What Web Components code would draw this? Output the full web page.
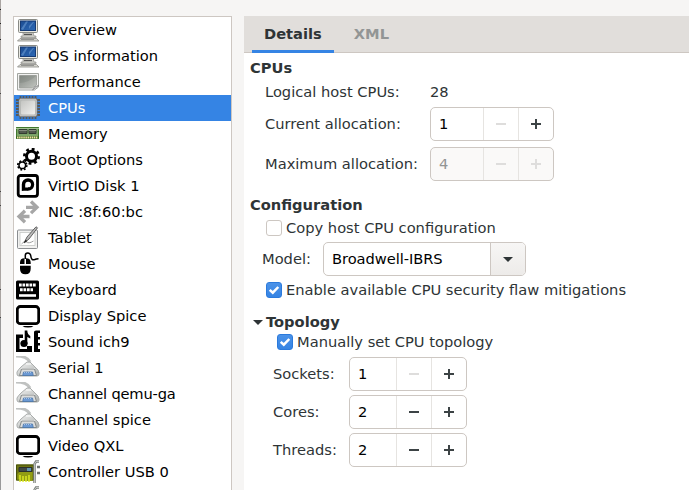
<!DOCTYPE html>
<html lang="en">
<head>
<meta charset="utf-8">
<title>CPUs</title>
<style>
html,body{margin:0;height:100%;overflow:hidden}
body{font-family:"DejaVu Sans",sans-serif;font-size:14.667px;color:#2e3436;background:#f6f5f4}
</style>
</head>
<body>
<vm-window></vm-window>
<script>
const grad = (id, a, b) => `<linearGradient id="${id}" x2="1" y2="1"><stop stop-color="${a}"/><stop offset="1" stop-color="${b}"/></linearGradient>`;
const ICONS = {
computer: `<defs>${grad('s','#1c4c92','#2d69b5')}</defs>
<path d="M4 20.500 1.500 23h21.500l-2.500-2.500z" fill="#d6d6d0" stroke="#8b8c87" stroke-width=".8"/><path d="M5 21.500h13" stroke="#777" stroke-width=".7"/>
<path d="M7 14h10l1 4h2v1.500H5V18h2z" fill="#c9c9c3" stroke="#81827e" stroke-width=".6"/><path d="M8 16.500h8" stroke="#555" stroke-width="1.300"/>
<rect x="2.500" y="1.500" width="19" height="13" rx="1" fill="#e8e8e2" stroke="#888a85"/>
<rect x="4.500" y="3" width="15" height="9.500" fill="url(#s)" stroke="#163b75"/><path d="M5 11 10 3.500h2L7 12z M13 8l4-4h1l-5 7z" fill="#6b9bd2" opacity=".6"/>`,
perf: `<defs>${grad('p','#858a84','#c2c5c0')}</defs><path d="M1.500 3.500h21V17l-4 3h-17z" fill="#f2f2f1" stroke="#a2a5a0"/><path d="M3.500 5.500h17v9.500l-4 3h-13z" fill="url(#p)" stroke="#999c97" stroke-width=".8"/><path d="M3.500 13Q12 13 20 6V5.500H3.500z" fill="#777d76" opacity=".3"/><path d="M16.500 20q1.500-4 6-4.500z" fill="#fff" stroke="#888" stroke-width=".8"/>`,
cpu: `<defs>${grad('c','#c4c5c2','#f0f0ee')}</defs><path d="M4.500 0v23M7.500 0v23M10.500 0v23M13.500 0v23M16.500 0v23M19.500 0v23M0 4h24M0 7h24M0 10h24M0 13h24M0 16h24M0 19h24" stroke="#55595b" stroke-width="1.800"/><rect x="2.500" y="2" width="19" height="19" rx="1.500" fill="#6b6f70"/><rect x="3.700" y="3.200" width="16.600" height="16.600" rx="1" fill="#b3b5b2" stroke="#d8d8d6" stroke-width=".8"/><rect x="5" y="4.500" width="14" height="14" rx="1" fill="url(#c)"/>`,
memory: `<path d="M0 5h23v12H0z" fill="#7fa96c"/><path d="M.5 5.500h22v10H.5z" fill="#7ca568" stroke="#42772d"/><path d="M0 6.500h23" stroke="#a4c494"/><path d="M3 7.500h8v4H3zM13 7.500h7v4h-7z" fill="#545b50" stroke="#333c31"/><path d="M3 8.500h8M13 8.500h7" stroke="#9da396" stroke-width=".7"/><path d="M0 15.500h23" stroke="#35661f" stroke-width="2.500"/><path d="M1 15.500h21" stroke="#f0dfa2" stroke-width="2" stroke-dasharray="1.500 .6"/>`,
gears: `<g fill="none" stroke="#000"><circle cx="15.500" cy="8.300" r="5" stroke-width="3"/><circle cx="15.500" cy="8.300" r="7.200" stroke-width="2.600" stroke-dasharray="2.800 2.855"/><circle cx="6.300" cy="17.300" r="3.300" stroke-width="1.500"/><circle cx="6.300" cy="17.300" r="4.500" stroke-width="1.700" stroke-dasharray="1.800 1.734"/></g>`,
disk: `<rect x="2.200" y="1.500" width="19.300" height="20.800" rx="2.200" fill="#fff" stroke="#000" stroke-width="2.800"/><path d="M5.800 17V10.500a6.200 6.200 0 1 1 6.200 6.200H8z"/><path d="M9.200 13.500V10.600a2.900 2.900 0 1 1 2.900 2.900z" fill="#fff"/><path d="M11 16.500l1.500-3.500 2 2z"/>`,
nic: `<g fill="none" stroke="#a6a6a6" stroke-width="3.300"><path d="M10 7.300h11M15 1.500l6 5.800-6 5.800M13.500 16.500h-11M9 10.700l-6 5.800L9 22.300"/></g>`,
tablet: `<rect x="1.500" y="4" width="20" height="18.500" rx="1" fill="#f1f1f0" stroke="#8a8d90"/><rect x="4" y="6.500" width="15" height="13" fill="#fff" stroke="#c4c6c4" stroke-width=".8"/><path d="M5.500 18q3-4 5-2t7-1" fill="none" stroke="#888" stroke-width=".8"/><path d="M8 17l3-6L20 .8l1.500 1L13 13z" fill="#bbb" stroke="#555" stroke-width=".9"/><path d="M8 17l1.500-3.300 2 1.300z" fill="#222"/>`,
mouse: `<path d="M4 12V10.500q0-4.300 4.500-4.300V12zM10 6.200q4.700 0 4.700 4.300V12H10zM4 13.700h10.700v3q0 5.500-5.300 5.500T4 16.700z"/><path d="M9.300 7V3.500q0-2.500 2.500-2.500t3 3q.5 5 4 3.500 1.500-.8 3.700-.8" fill="none" stroke="#000" stroke-width="1.500"/>`,
keyboard: `<rect x="0" y="2.500" width="23" height="19" rx="1.500"/><path d="M3 7h17M4 11.700h13" stroke="#fff" stroke-width="3" stroke-dasharray="2.700 .8"/><path d="M3 17.500h17" stroke="#fff" stroke-width="2.600"/>`,
display: `<rect x="1.300" y="2.500" width="21.400" height="17.200" rx="3" fill="#fff" stroke="#000" stroke-width="2.800"/><path d="M6.500 22h11q-1.500 1.500-5.500 1.500T6.500 22z"/>`,
sound: `<path d="M0 4.500h7v3.500H3.500v11H11v-3h5v6H0zM18 2q0-1.500 2-1.500h4V3h-2v4h2v2.500h-2V13h2v2.500h-2V19h2v3h-6z"/><circle cx="8" cy="13.500" r="3.600"/><path d="M8.700.5h2.600q0 3.500 3 5.500v2.500l-3-1.500v7H8.700z"/>`,
serial: `<defs>${grad('h','#f5f5f4','#aaaead')}</defs><path d="M0 0Q11 0 14 6" fill="none" stroke="#c0c2c1" stroke-width="3"/><path d="M1 16q1-2 4-5l6-5h3l5 5q4 3 4 6v1q0 2-2 2H3q-2 0-2-2z" fill="url(#h)" stroke="#aaadac"/><path d="M5 12.500h14M10 8h5" stroke="#fff"/><path d="M5.500 13h13l2 6.500H3.500z" fill="#dcdddd" stroke="#858988"/><path d="M7.500 16h9l.8 3.500H6.700z" fill="#6d9ad4" stroke="#4a76aa" stroke-width=".8"/><path d="M8 16.500h8" stroke="#a9c3e4" stroke-dasharray="1 1"/>`,
card: `<path d="M0 4.500h18v16H0z" fill="#6d7413"/><path d="M.5 5h17v15H.5z" fill="none" stroke="#465009"/><path d="M1.500 20V14l2-2h13v9H4v-2z" fill="#929d13"/><path d="M4 22v-7M7 22v-6M10 22v-6M13 22v-7" stroke="#e2ed24" stroke-width="1.400"/><path d="M3 7.500h13v4H3z" fill="#404945" stroke="#2b302d"/><path d="M11 8h4v3h-4z" fill="#6294b0"/><path d="M18.500 23V4l1.500-2.500h3" fill="none" stroke="#7b7f7c" stroke-width="2.500"/><path d="M18.500 23V4l1.500-2.500h3" fill="none" stroke="#d2d5d2" stroke-width=".8"/><path d="M21 7h3M21 13h3" stroke="#6e726e" stroke-width="2.500"/>`
};

function define(name, render) {
  customElements.define(name, class extends HTMLElement {
    connectedCallback() {
      if (!this.shadowRoot) this.attachShadow({mode: 'open'}).innerHTML = render(this);
    }
  });
}

define('hw-item', e => `<style>
:host{display:flex;align-items:center;height:26px;padding-left:2px;gap:8px;color:#000;white-space:nowrap}
:host([selected]){background:#3584e4;color:#fff}
svg{width:24px;height:24px;flex:none}
span{padding-bottom:2px}
</style><svg viewBox="0 0 24 24">${ICONS[e.getAttribute('icon')]}</svg><span><slot></slot></span>`);

define('hw-list', () => `<style>
:host{display:block;box-sizing:border-box;width:219px;border:1px solid #cdc7c2;border-bottom:0;background:#fff;overflow:hidden}
</style><slot></slot>`);

define('tab-bar', () => `<style>
:host{display:flex;height:36px;padding-left:8px;gap:8px;background:#e1dedb;border-bottom:1px solid #cdc7c2;font-weight:bold}
span{height:37px;box-sizing:border-box;padding:0 12px;line-height:36px;color:#929595}
.on{color:#2e3436;border-bottom:3px solid #3584e4}
</style><span class="on">Details</span><span>XML</span>`);

define('spin-button', e => {
  const off = e.hasAttribute('disabled');
  const m = off || e.hasAttribute('min') ? ' class="dim"' : '', p = off ? ' class="dim"' : '';
  return `<style>
:host{display:flex;box-sizing:border-box;width:118px;height:34px;border:1px solid #cdc7c2;border-radius:5px;background:#fff;color:#000;line-height:32px}
:host([wide]){width:124px}
:host([disabled]){background:#faf9f8;color:#929595}
span{flex:1;padding-left:8px}
i{width:34px;border-left:1px solid #e6e4e1;display:grid;place-items:center}
svg{width:12px;height:12px;stroke:#3c4345;stroke-width:2}
.dim{stroke:#dedddc}
</style><span>${e.getAttribute('value')}</span><i><svg${m} viewBox="0 0 12 12"><path d="M1 6h10"/></svg></i><i><svg${p} viewBox="0 0 12 12"><path d="M1 6h10M6 1v10"/></svg></i>`;
});

define('check-box', e => `<style>
:host{display:flex;align-items:center;gap:4px;white-space:nowrap}
b{box-sizing:border-box;width:16px;height:16px;border:1px solid #cdc7c2;border-radius:3px;background:#fff;display:block}
span{padding-bottom:2px}
:host([checked]) b{border-color:#2b7adc;background:linear-gradient(#4b92e8,#3584e4)}
svg{display:block;width:14px;height:14px}
</style><b>${e.hasAttribute('checked') ? '<svg viewBox="0 0 14 14"><path d="M2.700 6.800 5.800 9.700 11.300 4" fill="none" stroke="#fff" stroke-width="2.500"/></svg>' : ''}</b><span><slot></slot></span>`);

define('combo-box', () => `<style>
:host{display:flex;box-sizing:border-box;width:203px;height:34px;border:1px solid #cdc7c2;border-radius:5px;background:#fff;color:#000;line-height:32px;overflow:hidden}
span{flex:1;padding-left:8px;letter-spacing:-.05px}
i{width:34px;border-left:1px solid #cdc7c2;background:linear-gradient(#f7f6f5,#edebe9);display:grid;place-items:center}
svg{width:10px;height:5px}
</style><span><slot></slot></span><i><svg viewBox="0 0 10 5"><path d="M0 0h10L5 5z" fill="#2e3436"/></svg></i>`);

define('form-row', e => `<style>
:host{display:flex;align-items:center;white-space:nowrap;height:${e.getAttribute('h') || 34}px;margin-top:${e.getAttribute('gap') || 0}px;padding-left:${e.getAttribute('indent') || 0}px}
label{flex:none;padding-bottom:2px;width:${e.getAttribute('label-width') || 0}px}
:host(:not([label])) label{display:none}
</style><label>${e.getAttribute('label') || ''}</label><slot></slot>`);

define('vm-window', () => `<style>
:host{display:grid;grid-template-columns:219px 1fr;column-gap:12px;height:490px;box-sizing:border-box;padding:16px 0 0 12px;border-left:1px solid #9c9896;border-image:linear-gradient(#aaa5a2 0 10px,#222 10px 11px,#aaa5a2 11px 24px,#222 24px 25px,#aaa5a2 25px 40px,#222 40px 41px,#aaa5a2 41px 94px,#444 94px 95px,#aaa5a2 95px 191px,#444 191px 192px,#aaa5a2 192px 205px,#444 205px 206px,#aaa5a2 206px 289px,#444 289px 290px,#aaa5a2 290px 317px,#444 317px 318px,#999 318px) 1;border-width:0 0 0 1px}
hw-list{height:474px}
main{background:#fff;height:474px;overflow:hidden}
section{display:block;padding:3px 0 0 6px}
strong,form-row>span{padding-bottom:2px}
strong svg{width:10px;height:5px;margin:0 3px 2px 3px}
.tight{letter-spacing:-.18px}
</style>
<hw-list>
<hw-item icon="computer">Overview</hw-item><hw-item icon="computer">OS information</hw-item><hw-item icon="perf">Performance</hw-item><hw-item icon="cpu" selected>CPUs</hw-item><hw-item icon="memory">Memory</hw-item><hw-item icon="gears">Boot Options</hw-item><hw-item icon="disk">VirtIO Disk 1</hw-item><hw-item icon="nic">NIC :8f:60:bc</hw-item><hw-item icon="tablet">Tablet</hw-item><hw-item icon="mouse">Mouse</hw-item><hw-item icon="keyboard">Keyboard</hw-item><hw-item icon="display">Display Spice</hw-item><hw-item icon="sound">Sound ich9</hw-item><hw-item icon="serial">Serial 1</hw-item><hw-item icon="serial" class="tight">Channel qemu-ga</hw-item><hw-item icon="serial">Channel spice</hw-item><hw-item icon="display">Video QXL</hw-item><hw-item icon="card">Controller USB 0</hw-item><hw-item icon="card"></hw-item>
</hw-list>
<main><tab-bar></tab-bar><section>
<form-row h="24"><strong>CPUs</strong></form-row>
<form-row h="24" indent="15" label-width="165" label="Logical host CPUs:"><span>28</span></form-row>
<form-row gap="3" indent="15" label-width="165" label="Current allocation:"><spin-button wide min value="1"></spin-button></form-row>
<form-row gap="6" indent="15" label-width="165" label="Maximum allocation:"><spin-button wide disabled value="4"></spin-button></form-row>
<form-row h="24" gap="12"><strong>Configuration</strong></form-row>
<form-row h="22" indent="16"><check-box>Copy host CPU configuration</check-box></form-row>
<form-row gap="3" indent="12" label-width="61" label="Model:"><combo-box>Broadwell-IBRS</combo-box></form-row>
<form-row h="22" gap="3" indent="16"><check-box checked>Enable available CPU security flaw mitigations</check-box></form-row>
<form-row h="22" gap="10"><strong><svg viewBox="0 0 10 5"><path d="M0 0h10L5 5z" fill="#2e3436"/></svg>Topology</strong></form-row>
<form-row h="18" indent="27"><check-box checked>Manually set CPU topology</check-box></form-row>
<form-row gap="6" indent="23" label-width="76" label="Sockets:"><spin-button min value="1"></spin-button></form-row>
<form-row gap="4" indent="23" label-width="76" label="Cores:"><spin-button value="2"></spin-button></form-row>
<form-row gap="4" indent="23" label-width="76" label="Threads:"><spin-button value="2"></spin-button></form-row>
</section></main>`);
</script>
</body>
</html>
